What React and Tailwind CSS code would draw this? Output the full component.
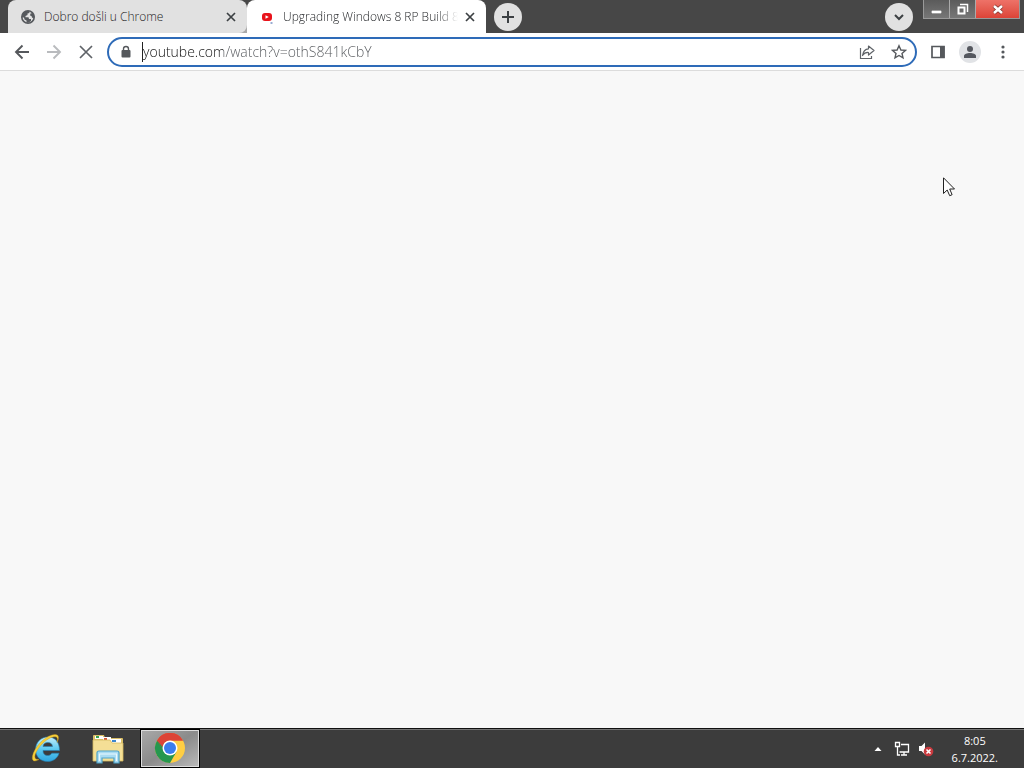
import React from 'react';

function GlobeIcon(){
  return (
    <svg className="w-4 h-4 shrink-0" viewBox="0 0 16 16">
      <circle cx="8" cy="8" r="6.2" fill="#e3e3e3" stroke="#56595d" strokeWidth="1.6" />
      <path d="M2 8.500C2 4 5 1.500 9 2L9.500 4 7.500 4.500 7.500 6 5.500 7 5.500 8.200 8.500 8.200 9 10 11 10 11 12 8 14 6.500 13.500 6.500 11.500 4.500 10.500 4 8.500Z" fill="#56595d" />
      <path d="M10 6.500 10.500 4.500 12.500 4 14.500 7 13.500 9.500 12 8.500 11.500 7Z" fill="#56595d" />
    </svg>
  );
}

function YoutubeIcon(){
  return (
    <svg className="w-4 h-4 shrink-0" viewBox="0 0 16 16">
      <rect x="3" y="4" width="10" height="8" rx="3" fill="#e8131b" />
      <path d="M6.500 6.200 9.800 8 6.500 9.800Z" fill="#fff" />
      <path d="M11.500 14h2" stroke="#5877b5" strokeWidth="1.200" />
    </svg>
  );
}

function Tab({ icon, title, active }){
  return (
    <div className={`flex items-center h-full w-[239px] min-w-0 pl-3 pr-2 rounded-t-lg ${active ? 'bg-white' : 'bg-[#e1e1e1] rounded-br-lg'}`}>
      {icon}
      <button role="tab" aria-selected={active} className={`flex-1 min-w-0 ml-2 text-left text-xs font-light whitespace-nowrap overflow-hidden text-[#1f2124] ${active ? '[mask-image:linear-gradient(to_right,#000_88%,transparent)]' : ''}`}>{title}</button>
      <button aria-label={`Zatvori ${title}`} className="w-4 h-4 ml-1 grid place-items-center">
        <svg className="w-4 h-4" viewBox="0 0 16 16"><path d="M4 4l8 8M12 4l-8 8" stroke="#3c4043" strokeWidth="1.700" /></svg>
      </button>
    </div>
  );
}

function TabStrip(){
  return (
    <header className="flex h-[33px] pl-2 pr-1 bg-[#474747]">
      <div className="flex min-w-0 rounded-t-lg bg-[linear-gradient(to_top,#aaa_8px,transparent_8px)]" role="tablist">
        <Tab icon={<GlobeIcon />} title="Dobro došli u Chrome" active={false} />
        <Tab icon={<YoutubeIcon />} title="Upgrading Windows 8 RP Build 8" active />
      </div>
      <button aria-label="Nova kartica" className="w-7 h-7 mt-[3px] ml-2 rounded-full bg-[#e1e1e1] grid place-items-center shrink-0">
        <svg className="w-4 h-4" viewBox="0 0 16 16"><path d="M8 2v12M2 8h12" stroke="#3c4043" strokeWidth="2" /></svg>
      </button>
      <button aria-label="Pretraži kartice" className="w-7 h-7 mt-[3px] ml-auto rounded-full bg-[#e1e1e1] grid place-items-center shrink-0">
        <svg className="w-4 h-4" viewBox="0 0 16 16"><path d="M4 6l4 4 4-4" fill="none" stroke="#3c4043" strokeWidth="2" /></svg>
      </button>
      <div className="flex h-[19px] ml-[10px] border border-t-0 border-[#999] shrink-0">
        <button aria-label="Minimiziraj" className="w-[26px] grid place-items-center bg-linear-to-b from-[#5b5b5b] to-[#777] border-r border-[#aaa]">
          <svg className="w-4 h-4" viewBox="0 0 16 16"><path d="M2 9h11v4h-11z" fill="#444" /><path d="M2.500 9.500h10v3h-10z" fill="#fff" /></svg>
        </button>
        <button aria-label="Obnovi" className="w-[26px] grid place-items-center bg-linear-to-b from-[#5b5b5b] to-[#777] border-r border-[#aaa]">
          <svg className="w-4 h-4" viewBox="0 0 16 16" fill="none" stroke="#fff"><path d="M5 3.500h7.500V11" strokeWidth="1.500" /><path d="M3.500 6.500h6v6h-6z" strokeWidth="2" /></svg>
        </button>
        <button aria-label="Zatvori" className="w-[43px] grid place-items-center bg-linear-to-b from-[#ee7268] to-[#dc4337]">
          <svg className="w-4 h-4" viewBox="0 0 16 16"><path d="M4 5l8 7M12 5l-8 7" stroke="#7c302a" strokeWidth="4" /><path d="M4 5l8 7M12 5l-8 7" stroke="#fff" strokeWidth="2.600" /></svg>
        </button>
      </div>
    </header>
  );
}

function Toolbar(){
  return (
    <nav className="flex items-center h-[38px] pl-3 pr-[11px] bg-white border-b border-[#dcdcdc]">
      <div className="flex gap-3 shrink-0">
        <button aria-label="Natrag" className="w-5 h-5">
          <svg className="w-5 h-5" viewBox="0 0 20 20" fill="none" stroke="#55585c" strokeWidth="1.900"><path d="M17 10H4M10.500 3.500 4 10l6.500 6.500" /></svg>
        </button>
        <button aria-label="Naprijed" className="w-5 h-5">
          <svg className="w-5 h-5" viewBox="0 0 20 20" fill="none" stroke="#b9bbbe" strokeWidth="1.900"><path d="M3 10h13M9.500 3.500 16 10l-6.500 6.500" /></svg>
        </button>
        <button aria-label="Zaustavi" className="w-5 h-5">
          <svg className="w-5 h-5" viewBox="0 0 20 20"><path d="M4 4l12 12M16 4 4 16" stroke="#5f6368" strokeWidth="1.700" /></svg>
        </button>
      </div>
      <div className="flex items-center flex-1 min-w-0 h-[30px] ml-[11px] pl-[11px] pr-2 rounded-full border-2 border-[#2e6bb8]">
        <svg className="w-3 h-4 shrink-0" viewBox="0 0 12 16"><path d="M3.500 7V5a2.500 2.500 0 0 1 5 0v2" fill="none" stroke="#55585c" strokeWidth="1.400" /><rect x="1.500" y="6" width="9" height="7.500" rx="1" fill="#55585c" /></svg>
        <span className="w-px h-5 ml-[10px] bg-[#222]" />
        {/* domain is darker than the path */}
        <input
          aria-label="Adresa"
          className="flex-1 min-w-0 h-6 text-sm font-light outline-none text-transparent bg-clip-text bg-linear-to-r from-[#111] from-[80px] to-[#55585c] to-[80px]"
          defaultValue="youtube.com/watch?v=othS841kCbY"
        />
        <button aria-label="Podijeli" className="w-4 h-4 ml-2">
          <svg className="w-4 h-4" viewBox="0 0 16 16" fill="none" stroke="#5f6368" strokeWidth="1.200"><path d="M1.500 4v10.500h11V12" /><path d="M9.500 2 15 6.500l-5.500 4.500V8.500C7 8.300 5 9.200 3.500 11.500 4 8 6 5 9.500 4.800Z" strokeLinejoin="round" /></svg>
        </button>
        <button aria-label="Označi karticu" className="w-4 h-4 ml-4">
          <svg className="w-4 h-4" viewBox="0 0 16 16" fill="none" stroke="#55585c" strokeWidth="1.400"><path d="M8 1.800 9.900 6l4.500.4-3.400 3 1 4.500L8 11.500l-4 2.400 1-4.500-3.400-3L6.100 6Z" /></svg>
        </button>
      </div>
      <button aria-label="Bočna ploča" className="w-4 h-4 ml-[13px] shrink-0">
        <svg className="w-4 h-4" viewBox="0 0 16 16"><path d="M2 2.500h12v11H2z" fill="none" stroke="#55585c" strokeWidth="1.700" /><path d="M10 2h4.500v12H10z" fill="#55585c" /></svg>
      </button>
      <button aria-label="Profil" className="w-[22px] h-[22px] ml-[13px] shrink-0">
        <svg className="w-[22px] h-[22px]" viewBox="0 0 22 22"><circle cx="11" cy="11" r="11" fill="#e1e3e6" /><circle cx="11" cy="8" r="3" fill="#55585f" /><path d="M5 17v-2c0-2 3-3 6-3s6 1 6 3v2Z" fill="#55585f" /></svg>
      </button>
      <button aria-label="Izbornik" className="w-5 h-5 ml-3 shrink-0">
        <svg className="w-5 h-5" viewBox="0 0 20 20" fill="#55585c"><circle cx="10" cy="5" r="1.600" /><circle cx="10" cy="10" r="1.600" /><circle cx="10" cy="15" r="1.600" /></svg>
      </button>
    </nav>
  );
}

function ExplorerIcon(){
  return (
    <svg className="w-8 h-8" viewBox="0 0 32 32">
      <defs>
        <linearGradient id="ie" x1="0" y1="0" x2="0" y2="1">
          <stop offset="0" stopColor="#c5eefa" />
          <stop offset="0.5" stopColor="#5ccaf0" />
          <stop offset="1" stopColor="#2fa6df" />
        </linearGradient>
      </defs>
      <path d="M29.500 17.500H13c0 3.500 2 5 4.500 5 2 0 3.500-.8 4.300-2.300h7.200C27.500 25.500 23 28.500 17.500 28.500 10.500 28.500 5.500 23.500 5.500 16.500 5.500 9.300 11 4 18 4c7.500 0 11.500 5.500 11.500 13.500ZM13 13.500h9.500c-.2-2.700-2-4-4.700-4s-4.500 1.300-4.800 4Z" fill="url(#ie)" stroke="#237fb3" strokeWidth="0.600" />
      <path d="M27 9.500C30 4 28.500 0 22 2 13 4.500 4 15.500 2.500 23 1.500 28.500 4.500 29 9 26.500 4 27 4 23 6.500 18.500 10.500 11 18 5 23 4c4-.8 5.500 1 4 5.500Z" fill="#f6cf3a" stroke="#c99a1c" strokeWidth="0.400" />
    </svg>
  );
}

function FolderIcon(){
  return (
    <svg className="w-8 h-8" viewBox="0 0 32 32">
      <path d="M1 3q0-1 1-1h10l1 3h17q1 0 1 1v20H1Z" fill="#dabf67" />
      <path d="M3 3h8v3H3z" fill="#fff" /><path d="M4 3h3v2H4z" fill="#36a350" />
      <path d="M11 4h8v4h-8z" fill="#fff" /><path d="M12 5h3v2h-3z" fill="#d45436" />
      <path d="M19 6h10v4H19z" fill="#fff" /><path d="M20 7h4v2h-4z" fill="#3c86cf" />
      <path d="M1 7h17l2 3h11v18H1Z" fill="#f4df96" stroke="#d6b961" strokeWidth="0.800" />
      <path d="M5 30V20q0-2 2-2h18q2 0 2 2v10h-5v-5H10v5Z" fill="#aadcf2" stroke="#4ea3c9" strokeWidth="1.200" />
      <path d="M7 21h18M7.500 21v7M24.500 21v7" stroke="#e7f8ff" strokeWidth="1.200" />
    </svg>
  );
}

function ChromeIcon(){
  return (
    <svg className="w-8 h-8" viewBox="0 0 32 32">
      <circle cx="16" cy="15" r="15" fill="#ffce43" />
      <path d="M3 7.500A15 15 0 0 0 16 30L22.500 18.750 16 15Z" fill="#26974f" />
      <path d="M3 7.500A15 15 0 0 1 29 7.500H16a7.500 7.500 0 0 0-6.500 11.250Z" fill="#dc4437" />
      <path d="M3 7.500 9.500 18.750 16 15Z" fill="#26974f" />
      <path d="M3 7.500A15 15 0 0 1 29 7.500H16a7.500 7.500 0 0 0-7.400 6.500Z" fill="#dc4437" />
      <circle cx="16" cy="15" r="7.500" fill="#fff" />
      <circle cx="16" cy="15" r="6" fill="#3b7ded" />
    </svg>
  );
}

function Taskbar(){
  return (
    <footer className="flex items-stretch h-10 pl-4 pr-[26px] bg-[#3c3c3c] border-t border-[#111] shadow-[inset_0_1px_0_#777]">
      <button aria-label="Internet Explorer" className="w-[60px] grid place-items-center"><ExplorerIcon /></button>
      <button aria-label="Eksplorer za datoteke" className="w-16 grid place-items-center"><FolderIcon /></button>
      <button aria-label="Google Chrome" className="w-[60px] grid place-items-center border border-black bg-linear-to-br from-[#aaa] via-[#8b8b8b] to-[#bbb] shadow-[inset_0_0_0_1px_#ddd]"><ChromeIcon /></button>
      <div className="flex items-center ml-auto">
        <button aria-label="Prikaži skrivene ikone" className="w-4 h-4">
          <svg className="w-4 h-4" viewBox="0 0 16 16"><path d="M4.500 10 8 6l3.500 4Z" fill="#fff" /></svg>
        </button>
        <button aria-label="Mreža" className="w-4 h-4 ml-2">
          <svg className="w-4 h-4" viewBox="0 0 16 16" fill="none" stroke="#fff" strokeWidth="1.300"><path d="M7 3.500h7.500v7.500H5.500M10 11v2.500M7 14h6" /><path d="M1.500 1.500h4v4h-4zM3.500 5.500V14H6" /></svg>
        </button>
        <button aria-label="Zvuk" className="w-4 h-4 ml-2">
          <svg className="w-4 h-4" viewBox="0 0 16 16"><path d="M1 5h2.500L7 1.500v12L3.500 10H1Z" fill="#fff" /><circle cx="10.500" cy="10.500" r="4.800" fill="#c93a3f" /><path d="M8.500 8.500l4 4M12.500 8.500l-4 4" stroke="#fff" strokeWidth="1.600" /></svg>
        </button>
        <time className="ml-[18px] text-[11px] leading-[17px] text-center text-white">8:05<br />6.7.2022.</time>
      </div>
    </footer>
  );
}

export default function App(){
  return (
    <div className="relative flex flex-col min-h-screen bg-[#f8f8f8] font-['Open_Sans','Noto_Sans',sans-serif]">
      <TabStrip />
      <Toolbar />
      <main className="flex-1" />
      <Taskbar />
      <svg className="absolute left-[943px] top-[177px] w-3 h-5" viewBox="0 0 12 20">
        <path d="M.5.800V16.500L4.200 13l2.500 5.700 2.400-1L6.700 12h4.800Z" fill="#fff" stroke="#222" />
      </svg>
    </div>
  );
}
